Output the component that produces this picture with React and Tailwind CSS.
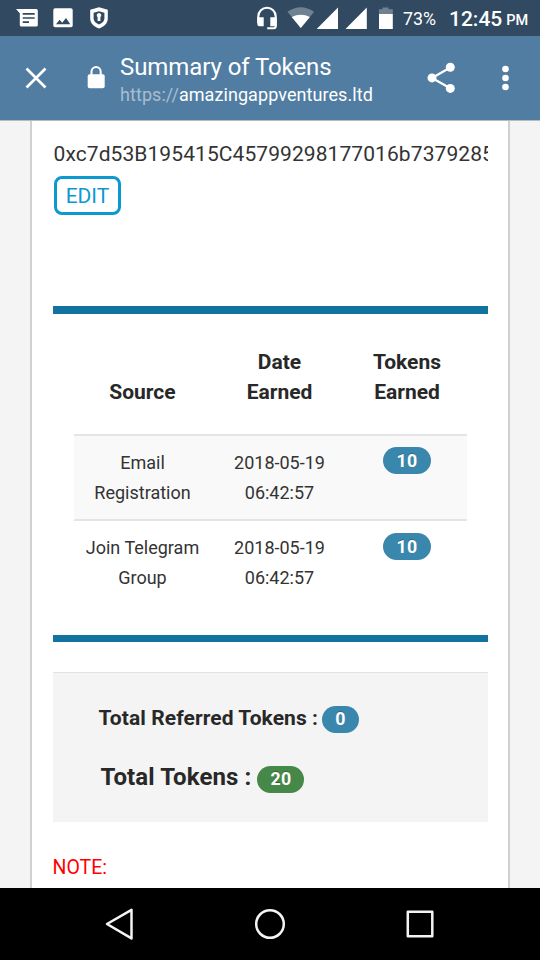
import React from "react";

function StatusBar() {
  return (
    <div className="flex h-9 bg-[#314a61] text-white">
      <svg width="400" height="36" viewBox="0 0 400 36" className="shrink-0" fill="white">
        <path d="M16 9h20.2a1.6 1.6 0 0 1 1.6 1.6v14.3a1.6 1.6 0 0 1-1.6 1.6H21.4a1.6 1.6 0 0 1-1.6-1.6V13.2z" />
        <path d="M22.7 13.8h12M22.7 18h12M22.7 22.2h6.3" stroke="#314a61" strokeWidth="1.7" />
        <rect x="53.3" y="8.3" width="19.4" height="19" rx="1.8" />
        <path d="M56 24.3l3.6-4.6 2.6 3 3.8-4.6 4.3 6.2z" fill="#314a61" />
        <path d="M99 7.3l8.8 2.5v8.6c0 4.9-3.5 8-8.8 10.2-5.3-2.2-8.8-5.3-8.8-10.2V9.8z" />
        <path d="M99 11.3l5.4 1.5v5.4c0 3-2 4.8-5.4 6.3-3.4-1.5-5.4-3.3-5.4-6.3v-5.4z" fill="#314a61" />
        <path d="M99 13a2.3 2.3 0 0 1 1.4 4.1v3.900h-2.800v-3.900A2.300 2.300 0 0 1 99 13z" />
        <path d="M258.300 23v-6.500a8.700 8.700 0 0 1 17.400 0v9.700q0 2-2 2h-6.500" fill="none" stroke="white" strokeWidth="2.100" />
        <path d="M257.300 17.200h6.400v9h-3.900a2.500 2.500 0 0 1-2.500-2.500zM270.300 17.200h6.400v9h-6.400z" />
        <path d="M287.500 11.800q13.300-9.200 26.600 0L300.800 28z" fill="#708292" />
        <path d="M291.700 17q9.100-4.600 18.200 0L300.800 28z" />
        <path d="M338 7.600V29h-21.300zM366.800 7.600V29h-21.300z" />
        <path d="M382.500 7.500h6v1.800h4.300v5.200h-13.800V9.300h3.500z" fill="#708292" />
        <path d="M379 14h13.800v15H379z" />
      </svg>
      <div className="flex grow items-start pl-[3px]">
        <span className="w-[46px] text-[17.800px] leading-[37px]">73%</span>
        <span className="text-[21px] font-medium leading-[38px]">12:45</span>
        <span className="pl-1 text-[14.500px] font-medium leading-[42px]">PM</span>
      </div>
    </div>
  );
}

function BrowserBar() {
  return (
    <div className="flex h-21 bg-[#517da2] text-white">
      <svg width="120" height="84" viewBox="0 0 120 84" className="shrink-0">
        <path d="M26.500 32.500l19 19M45.500 32.500l-19 19" stroke="white" strokeWidth="2.700" />
        <rect x="87.700" y="38.300" width="17" height="14" rx="2" fill="white" />
        <path d="M91.500 39v-3.300a4.600 4.600 0 0 1 9.200 0V39" fill="none" stroke="white" strokeWidth="2" />
      </svg>
      <div className="w-[300px] shrink-0 pt-[15px]">
        <div className="whitespace-nowrap text-[24px] leading-8 tracking-[-0.080px]">Summary of Tokens</div>
        <div className="whitespace-nowrap text-[18px] leading-6 tracking-[0.070px] text-[#a8bed1]">
          https://<span className="text-white">amazingappventures.ltd</span>
        </div>
      </div>
      <svg width="120" height="84" viewBox="420 0 120 84" className="shrink-0" fill="white">
        <path d="M450.300 31.500l-18.300 10.400 18.300 10.400" fill="none" stroke="white" strokeWidth="2.300" />
        <circle cx="450.300" cy="31.300" r="4.500" />
        <circle cx="432" cy="41.900" r="4.500" />
        <circle cx="450.300" cy="52.400" r="4.500" />
        <circle cx="505.500" cy="33" r="3.300" />
        <circle cx="505.500" cy="42" r="3.300" />
        <circle cx="505.500" cy="51" r="3.300" />
      </svg>
    </div>
  );
}

function Badge({ children, green }) {
  return (
    <span
      className={`inline-flex h-[27px] items-center justify-center rounded-full px-[13px] text-[17.800px] font-bold tracking-[0.300px] text-white [text-shadow:0_-1px_0_rgba(0,0,0,0.250)] ${green ? "bg-[#468847]" : "bg-[#3a87ad]"}`}
    >
      {children}
    </span>
  );
}

const rows = [
  { source: ["Email", "Registration"], date: "2018-05-19", time: "06:42:57", tokens: 10 },
  { source: ["Join Telegram", "Group"], date: "2018-05-19", time: "06:42:57", tokens: 10 },
];

function TokenTable() {
  return (
    <div className="mt-[91px] h-[336px] border-t-8 border-b-[7px] border-[#1272a0] px-[21px] pt-[33px]">
      <div className="grid h-[87px] grid-cols-[138px_136px_119px] text-center text-[21px] font-bold leading-[30px] text-[#282828]">
        <div className="pt-[30px]">Source</div>
        <div>Date<br />Earned</div>
        <div>Tokens<br />Earned</div>
      </div>
      {rows.map((r, i) => (
        <div
          key={i}
          className={`grid grid-cols-[138px_136px_119px] border-t-2 border-[#e4e4e4] pt-[11px] text-center text-[18px] leading-[30px] ${i === 0 ? "h-[85px] bg-[#f9f9f9]" : "h-[86px]"}`}
        >
          <div className="pt-px">{r.source[0]}<br />{r.source[1]}</div>
          <div className="pt-px">{r.date}<br />{r.time}</div>
          <div className={`flex items-start justify-center ${i === 1 ? "pt-px" : ""}`}><Badge>{r.tokens}</Badge></div>
        </div>
      ))}
    </div>
  );
}

function NavBar() {
  return (
    <div className="h-18 bg-black">
      <svg width="540" height="72" viewBox="0 888 540 72" fill="none" stroke="#f4f4f4" strokeWidth="2.500" strokeLinejoin="round">
        <path d="M131.500 909.800v28.600L107 924z" />
        <circle cx="270" cy="924" r="13.800" />
        <rect x="407.800" y="911.800" width="24.500" height="24.500" />
      </svg>
    </div>
  );
}

export default function App() {
  return (
    <div className="flex h-[960px] w-[540px] flex-col overflow-hidden bg-[#f4f4f4] font-['Roboto',sans-serif] text-[#333]">
      <StatusBar />
      <BrowserBar />
      <div className="flex h-[768px] justify-center border-t border-[#b4bcc0]">
        <div className="w-[480px] border-x-2 border-[#d0d0d0] bg-white px-[20.500px]">
          <div className="mt-[18px] h-[30px] overflow-hidden whitespace-nowrap pl-px text-[21px] leading-[30px] tracking-[0.080px]">
            0xc7d53B195415C45799298177016b7379285
          </div>
          <div className="ml-[1.500px] mt-[7px] flex h-[39px] w-[67px] items-center justify-center rounded-[8px] border-3 border-[#0c99d0] pt-0.5 text-[21px] text-[#0c99d0]">
            EDIT
          </div>
          <TokenTable />
          <div className="mt-[30px] h-[150px] border-t border-[#e2e2e2] bg-[#f4f4f4] pl-[46px] pt-[31px] font-bold text-[#282828]">
            <div className="flex h-[30px] items-center gap-1 whitespace-nowrap">
              <span className="-mt-px text-[21px] tracking-[0.080px]">Total Referred Tokens :</span>
              <Badge>0</Badge>
            </div>
            <div className="mt-[30px] flex h-[30px] items-center gap-1.5 whitespace-nowrap pl-0.5">
              <span className="-mt-1 text-[24px] tracking-[0.100px]">Total Tokens :</span>
              <Badge green>20</Badge>
            </div>
          </div>
          <div className="mt-[31px] text-[19.500px] leading-[30px] text-[#f00]">NOTE:</div>
        </div>
      </div>
      <NavBar />
    </div>
  );
}
